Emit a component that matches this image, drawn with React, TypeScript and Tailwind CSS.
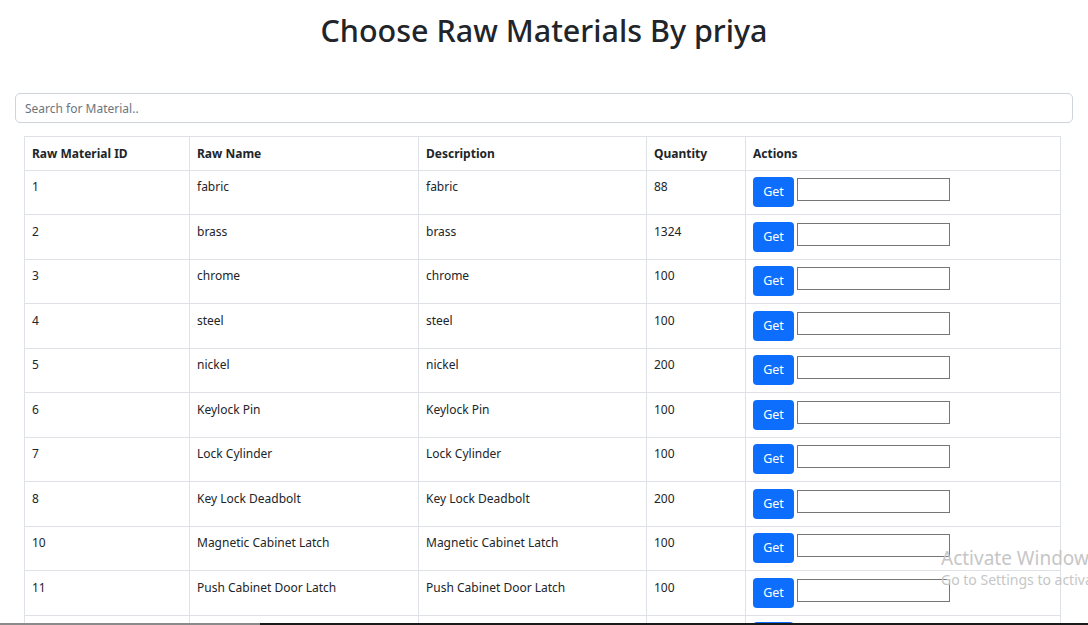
import { useState } from "react";

type Material = { id: number; name: string; description: string; quantity: number };

const materials: Material[] = [
  { id: 1, name: "fabric", description: "fabric", quantity: 88 },
  { id: 2, name: "brass", description: "brass", quantity: 1324 },
  { id: 3, name: "chrome", description: "chrome", quantity: 100 },
  { id: 4, name: "steel", description: "steel", quantity: 100 },
  { id: 5, name: "nickel", description: "nickel", quantity: 200 },
  { id: 6, name: "Keylock Pin", description: "Keylock Pin", quantity: 100 },
  { id: 7, name: "Lock Cylinder", description: "Lock Cylinder", quantity: 100 },
  { id: 8, name: "Key Lock Deadbolt", description: "Key Lock Deadbolt", quantity: 200 },
  { id: 10, name: "Magnetic Cabinet Latch", description: "Magnetic Cabinet Latch", quantity: 100 },
  { id: 11, name: "Push Cabinet Door Latch", description: "Push Cabinet Door Latch", quantity: 100 },
  { id: 12, name: "Cabinet Hinge", description: "Cabinet Hinge", quantity: 100 },
];

const cell = "border border-[#dee2e6] px-[7px] py-[6.75px] align-top";

const App = () => {
  const [search, setSearch] = useState("");

  const rows = materials.filter((m) =>
    m.name.toLowerCase().includes(search.toLowerCase())
  );

  return (
    <div className="relative h-[625px] overflow-hidden bg-white text-[#212529] font-['Noto_Sans',sans-serif] text-[12px] leading-[20px]">
      <h1 className="mt-[11px] text-center text-[30.5px] leading-[38px] font-medium">
        Choose Raw Materials By priya
      </h1>

      <div className="mt-[44px] px-[15px]">
        <input
          value={search}
          onChange={(e) => setSearch(e.target.value)}
          placeholder="Search for Material.."
          className="block w-full h-[30px] rounded-[5px] border border-[#ced4da] px-[9px] text-[12px] placeholder:text-[#6c757d] outline-none"
        />
      </div>

      <div className="mt-[13px] pl-[24px] pr-[27px]">
        <table className="w-full table-fixed border-collapse">
          <thead>
            <tr className="font-bold leading-[19px]">
              <th className={`${cell} w-[165px] text-left`}>Raw Material ID</th>
              <th className={`${cell} w-[229px] text-left`}>Raw Name</th>
              <th className={`${cell} w-[228px] text-left`}>Description</th>
              <th className={`${cell} w-[99px] text-left`}>Quantity</th>
              <th className={`${cell} text-left`}>Actions</th>
            </tr>
          </thead>
          <tbody>
            {rows.map((m) => (
              <tr key={m.id}>
                <td className={cell}>{m.id}</td>
                <td className={cell}>{m.name}</td>
                <td className={cell}>{m.description}</td>
                <td className={cell}>{m.quantity}</td>
                <td className={cell}>
                  <div className="flex items-start gap-[3px]">
                    <button className="h-[30px] w-[41px] rounded-[4px] bg-[#0d6efd] text-white text-[12.5px]">
                      Get
                    </button>
                    <input className="mt-[1px] h-[23px] w-[153px] border border-[#767676] outline-none px-1" />
                  </div>
                </td>
              </tr>
            ))}
          </tbody>
        </table>
      </div>

      <div className="pointer-events-none absolute left-[941px] top-[547px] whitespace-nowrap text-[#c6c6c6]">
        <div className="text-[19px] leading-[22px]">Activate Windows</div>
        <div className="text-[14px] leading-[22px]">Go to Settings to activate Windows.</div>
      </div>

      <div className="absolute bottom-0 left-0 right-0 flex h-[2px]">
        <div className="w-[260px] bg-[#8a8a8a]" />
        <div className="flex-1 bg-[#1a1a1a]" />
      </div>
    </div>
  );
};

export default App;
